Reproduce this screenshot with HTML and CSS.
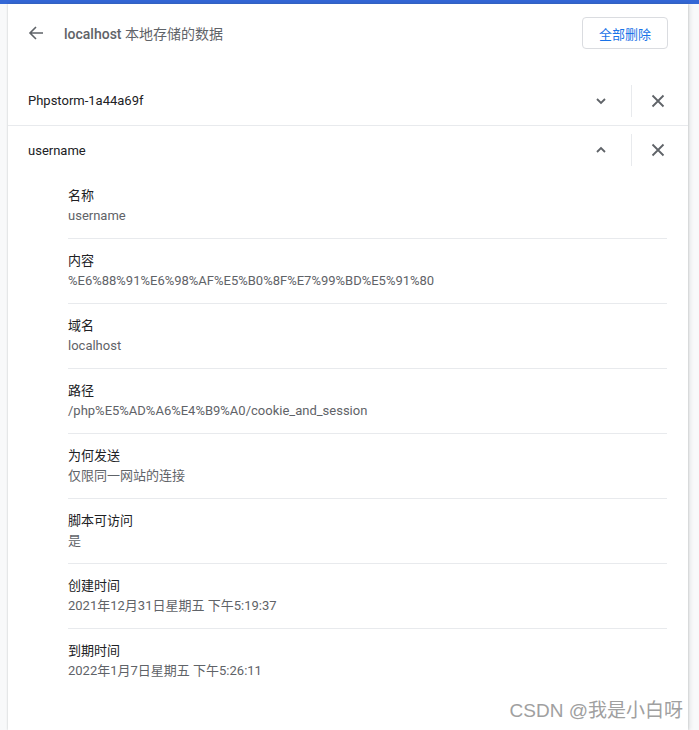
FILE: index.html
```html
<!DOCTYPE html>
<html lang="zh-CN">
<head>
    <meta charset="UTF-8">
    <title>localhost 本地存储的数据</title>
    <link rel="stylesheet" href="styles.css">
</head>
<body>
    <div class="topbar"></div>

    <div class="card">
        <!-- header -->
        <div class="header">
            <button class="icon-btn back-btn" aria-label="返回">
                <svg width="16" height="16" viewBox="0 0 16 16"><path d="M15 8H2.8M8 2L2 8l6 6" fill="none" stroke="#5f6368" stroke-width="1.6"/></svg>
            </button>
            <h1 class="title"><b>localhost</b> 本地存储的数据</h1>
            <button class="remove-all">全部删除</button>
        </div>

        <!-- cookies -->
        <div class="cookie-list">
            <div class="cookie-row">
                <span class="cookie-name">Phpstorm-1a44a69f</span>
                <button class="icon-btn expand-btn" aria-label="展开">
                    <svg width="12" height="8" viewBox="0 0 12 8"><path d="M2 2l4 4 4-4" fill="none" stroke="#5f6368" stroke-width="1.8"/></svg>
                </button>
                <span class="separator"></span>
                <button class="icon-btn close-btn" aria-label="删除">
                    <svg width="14" height="14" viewBox="0 0 14 14"><path d="M1.5 1.5l11 11M12.5 1.5l-11 11" fill="none" stroke="#5f6368" stroke-width="1.8"/></svg>
                </button>
            </div>
            <div class="cookie-row open">
                <span class="cookie-name">username</span>
                <button class="icon-btn expand-btn" aria-label="收起">
                    <svg width="12" height="8" viewBox="0 0 12 8"><path d="M2 6l4-4 4 4" fill="none" stroke="#5f6368" stroke-width="1.8"/></svg>
                </button>
                <span class="separator"></span>
                <button class="icon-btn close-btn" aria-label="删除">
                    <svg width="14" height="14" viewBox="0 0 14 14"><path d="M1.5 1.5l11 11M12.5 1.5l-11 11" fill="none" stroke="#5f6368" stroke-width="1.8"/></svg>
                </button>
            </div>

            <div class="details">
                <div class="detail">
                    <div class="label">名称</div>
                    <div class="value">username</div>
                </div>
                <div class="detail">
                    <div class="label">内容</div>
                    <div class="value">%E6%88%91%E6%98%AF%E5%B0%8F%E7%99%BD%E5%91%80</div>
                </div>
                <div class="detail">
                    <div class="label">域名</div>
                    <div class="value">localhost</div>
                </div>
                <div class="detail">
                    <div class="label">路径</div>
                    <div class="value">/php%E5%AD%A6%E4%B9%A0/cookie_and_session</div>
                </div>
                <div class="detail">
                    <div class="label">为何发送</div>
                    <div class="value">仅限同一网站的连接</div>
                </div>
                <div class="detail">
                    <div class="label">脚本可访问</div>
                    <div class="value">是</div>
                </div>
                <div class="detail">
                    <div class="label">创建时间</div>
                    <div class="value">2021年12月31日星期五 下午5:19:37</div>
                </div>
                <div class="detail">
                    <div class="label">到期时间</div>
                    <div class="value">2022年1月7日星期五 下午5:26:11</div>
                </div>
            </div>
        </div>
    </div>

    <div class="watermark">CSDN @我是小白呀</div>
</body>
</html>
```
FILE: styles.css
```css
body {
    margin: 0;
    background: #f8f9fa;
    font-family: Roboto, "Noto Sans CJK SC", sans-serif;
    font-size: 13px;
    color: #202124;
    height: 730px;
    overflow: hidden;
    position: relative;
}

.topbar {
    height: 4px;
    background: #3367d6;
}

.card {
    margin-left: 8px;
    width: 680px;
    min-height: 726px;
    background: #fff;
    box-shadow: 0 0 2px rgba(60, 64, 67, 0.25), 2px 0 4px rgba(60, 64, 67, 0.12);
}

button {
    font-family: inherit;
    background: none;
    border: none;
    padding: 0;
    cursor: pointer;
}

.icon-btn {
    display: flex;
    align-items: center;
    justify-content: center;
    width: 40px;
    height: 40px;
}

.header {
    display: flex;
    align-items: center;
    height: 58px;
    padding: 0 20px 0 8px;
}

.back-btn {
    width: 40px;
}

.title {
    flex: 1;
    margin: 0 0 0 8px;
    font-size: 14px;
    font-weight: normal;
    color: #5f6368;
}

.title b {
    font-weight: 500;
}

.remove-all {
    height: 32px;
    padding: 0 16px;
    border: 1px solid #dadce0;
    border-radius: 4px;
    color: #1a73e8;
    font-size: 13px;
}

.cookie-list {
    margin-top: 14px;
}

.cookie-row {
    display: flex;
    align-items: center;
    height: 49px;
    padding: 0 10px 0 20px;
    border-bottom: 1px solid #e8eaed;
}

.cookie-row.open {
    height: 48px;
    border-bottom: none;
}

.cookie-name {
    flex: 1;
}

.expand-btn {
    margin-right: 10px;
}

.separator {
    width: 1px;
    height: 32px;
    background: #e8eaed;
    margin-right: 6px;
}

.details {
    padding: 0 21px 0 60px;
}

.detail {
    padding: 12px 0;
    height: 40px;
    border-bottom: 1px solid #e8eaed;
}

.detail:last-child {
    border-bottom: none;
}

.label,
.value {
    line-height: 20px;
}

.value {
    color: #5f6368;
}

.watermark {
    position: absolute;
    right: 16px;
    bottom: 8px;
    font-family: "Liberation Sans", "Noto Sans CJK SC", sans-serif;
    font-size: 19px;
    color: #a0a0a0;
}
```
